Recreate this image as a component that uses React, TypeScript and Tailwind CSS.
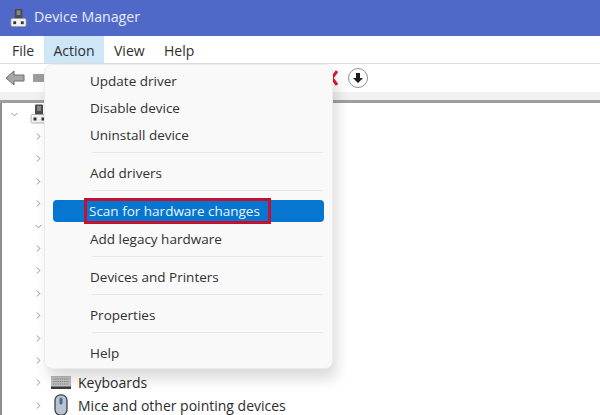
import { ChevronDown, ChevronRight } from 'lucide-react';

const font = "font-['Open_Sans','Noto_Sans',sans-serif]";

function DeviceIcon({ className }: { className: string }) {
  return (
    <svg viewBox="0 0 18 20" className={className}>
      <rect x="5" y="0.5" width="8" height="11" rx="1" fill="#4a4a4a" />
      <rect x="7" y="2" width="4" height="5" fill="#8a8a8a" />
      <rect x="1" y="10.5" width="16" height="8.5" rx="1.5" fill="#f2f2f2" stroke="#9a9a9a" strokeWidth="0.7" />
      <rect x="3.5" y="13.5" width="3" height="3" fill="#333" />
      <rect x="11.5" y="13.5" width="3" height="3" fill="#333" />
    </svg>
  );
}

function KeyboardIcon() {
  return (
    <svg viewBox="0 0 20 13" className="w-5 h-[13px]">
      <rect x="0.5" y="0.5" width="19" height="12" fill="#c4c4c4" stroke="#9a9a9a" strokeWidth="0.6" />
      <path d="M2 3h16M2 5.5h16M2 8h16" stroke="#858585" strokeWidth="1" strokeDasharray="1.4 0.8" />
      <rect x="0" y="10.5" width="20" height="2.5" fill="#3a3a3a" />
    </svg>
  );
}

function MouseIcon() {
  return (
    <svg viewBox="0 0 14 22" className="w-3.5 h-[22px]">
      <rect x="1" y="0.8" width="12" height="20.4" rx="5.5" fill="#b7c3cf" stroke="#3c4148" strokeWidth="1.3" />
      <rect x="5.5" y="3.5" width="3" height="7" rx="1.5" fill="#4d6a8a" />
    </svg>
  );
}

function TreeRow({ open, label, icon, indent = true }: { open?: boolean; label?: string; icon?: React.ReactNode; indent?: boolean }) {
  const Chev = open ? ChevronDown : ChevronRight;
  return (
    <div className={`h-[22.4px] flex items-center ${indent ? 'pl-[31px]' : 'pl-[7px]'}`}>
      <Chev className="w-[11px] h-[11px] text-[#8a8a8a] shrink-0" strokeWidth={2} />
      <div className="w-[34px] flex justify-center shrink-0">{icon}</div>
      {label && <span className="text-[14px] text-[#2b2b2b] whitespace-nowrap">{label}</span>}
    </div>
  );
}

function MenuItem({ label, className = '' }: { label: string; className?: string }) {
  return <div className={`h-[27px] flex items-center pl-[45px] text-[13.5px] text-[#303030] ${className}`}>{label}</div>;
}

function Sep({ className = 'my-[4px]' }: { className?: string }) {
  return <div className={`h-px bg-[#e8e8e8] ml-[47px] mr-[9px] ${className}`} />;
}

export default function App() {
  return (
    <div className={`relative w-[600px] h-[415px] overflow-hidden bg-white ${font}`}>
      <div className="h-9 bg-[#5069c9] flex items-center pl-[10px] gap-[7px]">
        <DeviceIcon className="w-[17px] h-5" />
        <span className="text-[14.2px] text-[#e6ecfb] -mt-[2px]">Device Manager</span>
      </div>

      <div className="h-[28px] flex items-stretch text-[14px] text-[#2e2e2e] border-b border-[#dcdcdc]">
        <div className="w-11 flex items-center pl-3 pt-[2px]">File</div>
        <div className="w-[60px] flex items-center justify-center bg-[#cde6f8] pt-[2px]">Action</div>
        <div className="w-[60px] flex items-center pl-[10px] pt-[2px]">View</div>
        <div className="flex items-center pt-[2px]">Help</div>
      </div>

      <div className="h-[28px] flex items-center pl-[5px]">
        <svg viewBox="0 0 20 16" className="w-5 h-4">
          <path d="M1 8 9 1v4h10v6H9v4z" fill="#a8a8a8" stroke="#6e6e6e" strokeWidth="1" />
        </svg>
        <div className="w-3 h-2 ml-2 bg-[#9d9d9d]" />
        <div className="ml-[281px] w-3 h-4">
          <svg viewBox="0 0 12 16" className="w-3 h-4">
            <path d="M1 1 11 15M11 1 1 15" stroke="#e0182d" strokeWidth="3" />
          </svg>
        </div>
        <div className="ml-[10px] w-5 h-5 rounded-full border border-[#8f8f8f] flex items-center justify-center">
          <svg viewBox="0 0 12 12" className="w-3 h-3">
            <path d="M4 1h4v5h3L6 11 1 6h3z" fill="#1c1c1c" />
          </svg>
        </div>
      </div>

      <div className="h-2 bg-[#f1f1f1]" />
      <div className="h-[3px] bg-[#9e9e9e]" />

      <div className="border-l-2 border-[#8f8f8f] h-[312px]">
        <TreeRow open indent={false} icon={<DeviceIcon className="w-[18px] h-5 ml-[4px]" />} />
        <TreeRow />
        <TreeRow />
        <TreeRow />
        <TreeRow />
        <TreeRow open />
        <TreeRow />
        <TreeRow />
        <TreeRow />
        <TreeRow />
        <TreeRow />
        <TreeRow />
        <TreeRow label="Keyboards" icon={<KeyboardIcon />} />
        <TreeRow label="Mice and other pointing devices" icon={<MouseIcon />} />
      </div>

      <div className="absolute left-[44px] top-[64px] w-[289px] h-[305px] bg-[#f9f9f9] rounded-lg border border-[#ececec] shadow-[4px_10px_14px_rgba(0,0,0,0.14)] pt-[3px]">
        <MenuItem label="Update driver" />
        <MenuItem label="Disable device" />
        <MenuItem label="Uninstall device" />
        <Sep className="mt-[3px] mb-[7px]" />
        <MenuItem label="Add drivers" />
        <Sep className="mt-[3px] mb-[9px]" />
        <div className="relative h-[22px] mx-2 bg-[#0676d1] rounded-sm flex items-center pl-[36px] text-[13.5px] text-[#eaf4fd]">
          Scan for hardware changes
          <div className="absolute left-[31px] top-[-2px] w-[187px] h-[26px] border-[3px] border-[#c8102e]" />
        </div>
        <MenuItem label="Add legacy hardware" className="mt-[4px]" />
        <Sep className="mt-[3px] mb-[7px]" />
        <MenuItem label="Devices and Printers" />
        <Sep className="mt-[3px] mb-[7px]" />
        <MenuItem label="Properties" />
        <Sep className="mt-[3px] mb-[7px]" />
        <MenuItem label="Help" />
      </div>
    </div>
  );
}
